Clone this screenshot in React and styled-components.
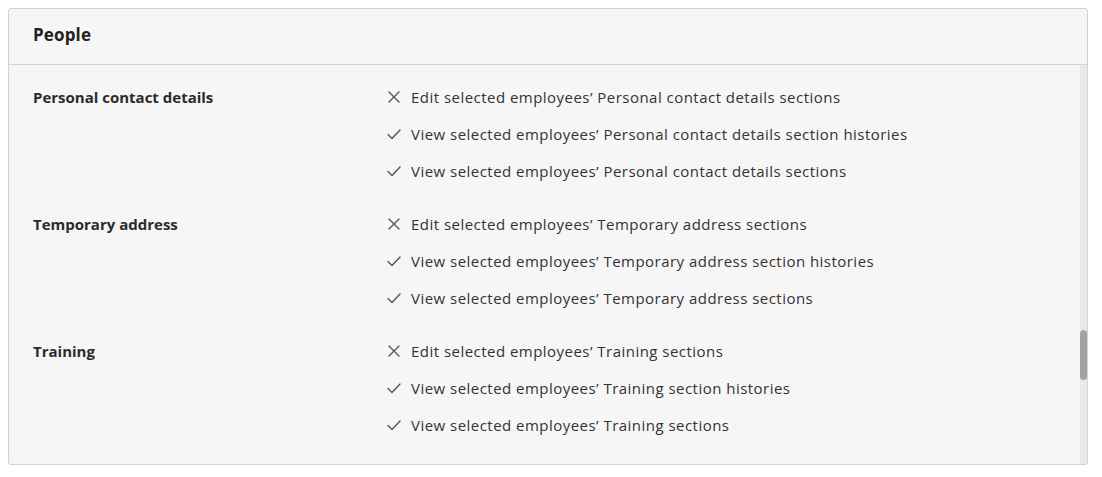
import React from 'react';
import styled, { createGlobalStyle } from 'styled-components';

const GlobalStyle = createGlobalStyle`
  body {
    margin: 0;
    background: #ffffff;
    font-family: "Open Sans", "Liberation Sans", sans-serif;
    color: #2b2b2b;
  }
`;

const Page = styled.div`
  padding: 8px 14px 12px 8px;
`;

const Card = styled.section`
  background: #f6f6f6;
  border: 1px solid #d2d2d2;
  border-radius: 3px;
  overflow: hidden;
`;

const CardHeader = styled.header`
  height: 56px;
  display: flex;
  align-items: center;
  padding: 0 24px 4px;
  box-sizing: border-box;
  border-bottom: 1px solid #d2d2d2;
`;

const CardTitle = styled.h2`
  margin: 0;
  font-size: 17px;
  font-weight: 700;
  letter-spacing: 0.15px;
  color: #222;
`;

const BodyWrap = styled.div`
  display: flex;
`;

const Body = styled.div`
  flex: 1;
  padding: 13px 24px 21px;
  display: flex;
  flex-direction: column;
  gap: 16px;
`;

const Section = styled.div`
  display: grid;
  grid-template-columns: 353px 1fr;
`;

const SectionLabel = styled.div`
  font-size: 15px;
  font-weight: 700;
  color: #2b2b2b;
  height: 37px;
  display: flex;
  align-items: center;
`;

const Perms = styled.ul`
  margin: 0;
  padding: 0;
  list-style: none;
`;

const Perm = styled.li`
  height: 37px;
  display: flex;
  align-items: center;
  gap: 9px;
  font-size: 15px;
  letter-spacing: 0.47px;
  color: #333;
`;

const IconBox = styled.span`
  width: 16px;
  height: 16px;
  display: flex;
  align-items: center;
  justify-content: center;
  color: #555;
`;

const Track = styled.div`
  width: 7px;
  background: #e9e9e9;
  padding-top: 265px;
`;

const Thumb = styled.div`
  height: 50px;
  border-radius: 4px;
  background: #a3a3a3;
`;

const CrossIcon = () => (
  <svg width="12" height="12" viewBox="0 0 12 12" fill="none">
    <path d="M1 1L11 11M11 1L1 11" stroke="currentColor" strokeWidth="1.4" strokeLinecap="round" />
  </svg>
);

const CheckIcon = () => (
  <svg width="14" height="12" viewBox="0 0 14 12" fill="none">
    <path d="M1 6.5L5 10.5L13 2" stroke="currentColor" strokeWidth="1.4" strokeLinecap="round" strokeLinejoin="round" />
  </svg>
);

const sections = [
  { name: 'Personal contact details' },
  { name: 'Temporary address' },
  { name: 'Training' },
];

const permsFor = (name) => [
  { allowed: false, text: `Edit selected employees’ ${name} sections` },
  { allowed: true, text: `View selected employees’ ${name} section histories` },
  { allowed: true, text: `View selected employees’ ${name} sections` },
];

const App = () => {
  return (
    <Page>
      <GlobalStyle />
      <Card>
        <CardHeader>
          <CardTitle>People</CardTitle>
        </CardHeader>
        <BodyWrap>
          <Body>
            {sections.map((s) => (
              <Section key={s.name}>
                <SectionLabel>{s.name}</SectionLabel>
                <Perms>
                  {permsFor(s.name).map((p) => (
                    <Perm key={p.text}>
                      <IconBox>{p.allowed ? <CheckIcon /> : <CrossIcon />}</IconBox>
                      {p.text}
                    </Perm>
                  ))}
                </Perms>
              </Section>
            ))}
          </Body>
          <Track>
            <Thumb />
          </Track>
        </BodyWrap>
      </Card>
    </Page>
  );
};

export default App;
